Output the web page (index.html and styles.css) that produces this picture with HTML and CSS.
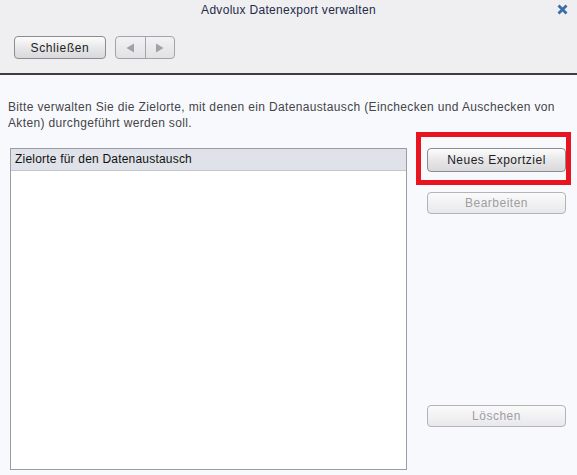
FILE: index.html
```html
<!DOCTYPE html>
<html lang="de">
<head>
<meta charset="utf-8">
<link rel="stylesheet" href="styles.css">
</head>
<body>
<div class="dialog">
  <div class="header">
    <div class="titlebar">
      <span class="title">Advolux Datenexport verwalten</span>
      <span class="close"><svg width="11" height="11" viewBox="0 0 11 11"><path d="M1.5 1.5 L9.5 9.5 M9.5 1.5 L1.5 9.5" stroke="#3a6ca6" stroke-width="2.8" stroke-linecap="butt"/></svg></span>
    </div>
    <div class="toolbar">
      <button class="btn close-btn">Schließen</button>
      <div class="nav">
        <span class="nav-part"><svg width="9" height="10" viewBox="0 0 9 10"><path d="M8 0.5 L8 9.5 L0.5 5 Z" fill="#a2a2a6"/></svg></span>
        <span class="nav-part"><svg width="9" height="10" viewBox="0 0 9 10"><path d="M1 0.5 L1 9.5 L8.5 5 Z" fill="#a2a2a6"/></svg></span>
      </div>
    </div>
  </div>
  <div class="content">
    <p class="desc">Bitte verwalten Sie die Zielorte, mit denen ein Datenaustausch (Einchecken und Auschecken von Akten) durchgeführt werden soll.</p>
    <div class="main">
      <div class="list">
        <div class="list-head">Zielorte für den Datenaustausch</div>
        <div class="list-body"></div>
      </div>
      <div class="actions">
        <div class="highlight-wrap">
          <button class="btn wide">Neues Exportziel</button>
          <span class="highlight"></span>
        </div>
        <button class="btn wide disabled">Bearbeiten</button>
        <button class="btn wide disabled bottom">Löschen</button>
      </div>
    </div>
  </div>
</div>
</body>
</html>
```
FILE: styles.css
```css
html, body {
  margin: 0;
  padding: 0;
}
body {
  width: 577px;
  height: 475px;
  overflow: hidden;
  font-family: "Liberation Sans", Arial, sans-serif;
  font-size: 12px;
  background: #f8f9fc;
}
.dialog {
  display: flex;
  flex-direction: column;
  height: 475px;
}
.header {
  background: #efeff1;
  height: 73px;
  border-bottom: 2px solid #3e3e42;
  box-sizing: content-box;
}
.titlebar {
  position: relative;
  height: 19px;
  display: flex;
  justify-content: center;
  align-items: center;
}
.title {
  color: #1f2a4a;
  font-size: 12px;
  letter-spacing: 0.3px;
}
.close {
  position: absolute;
  right: 9px;
  top: 4px;
  width: 11px;
  height: 11px;
  display: flex;
}
.toolbar {
  display: flex;
  gap: 9px;
  padding: 17px 0 0 14px;
}
.btn {
  font-family: "Liberation Sans", Arial, sans-serif;
  font-size: 12px;
  color: #222;
  background: linear-gradient(#fcfcfc, #e6e6e8 55%, #d9d9dc);
  border: 1px solid #8c8c90;
  border-radius: 4px;
  padding: 0;
  margin: 0;
  box-sizing: border-box;
  letter-spacing: 0.5px;
}
.close-btn {
  width: 92px;
  height: 23px;
  letter-spacing: 0.6px;
}
.nav {
  display: flex;
  width: 60px;
  height: 23px;
  box-sizing: border-box;
  border: 1px solid #a4a4a8;
  border-radius: 4px;
  background: linear-gradient(#f2f2f4, #e2e2e5);
}
.nav-part {
  flex: 1;
  display: flex;
  align-items: center;
  justify-content: center;
}
.nav-part + .nav-part {
  border-left: 1px solid #a4a4a8;
}
.content {
  flex: 1;
  display: flex;
  flex-direction: column;
  background: #f8f9fc;
}
.desc {
  margin: 0;
  padding: 24px 8px 0 8px;
  line-height: 16px;
  color: #444449;
  letter-spacing: 0.35px;
}
.main {
  display: flex;
  gap: 20px;
  padding: 17px 0 0 10px;
}
.list {
  width: 397px;
  height: 322px;
  box-sizing: border-box;
  border: 1px solid #9a9ba6;
  background: #fff;
  display: flex;
  flex-direction: column;
}
.list-head {
  height: 22px;
  box-sizing: border-box;
  background: #dfe2e8;
  border-bottom: 1px solid #c4c6cc;
  color: #111;
  padding: 3px 0 0 4px;
  letter-spacing: 0.2px;
}
.list-body {
  flex: 1;
}
.actions {
  display: flex;
  flex-direction: column;
  width: 139px;
}
.wide {
  width: 139px;
  height: 24px;
}
.highlight-wrap {
  position: relative;
  display: flex;
}
.highlight {
  position: absolute;
  left: -11px;
  top: -16px;
  width: 155px;
  height: 53px;
  box-sizing: border-box;
  border: 5px solid #e8141f;
  pointer-events: none;
}
.disabled {
  color: #9e9ea2;
  border-color: #b4b4b8;
  background: linear-gradient(#fafafb, #f0f0f2 60%, #e8e8eb);
  margin-top: 20px;
  height: 22px;
}
.bottom {
  margin-top: 191px;
}
```
